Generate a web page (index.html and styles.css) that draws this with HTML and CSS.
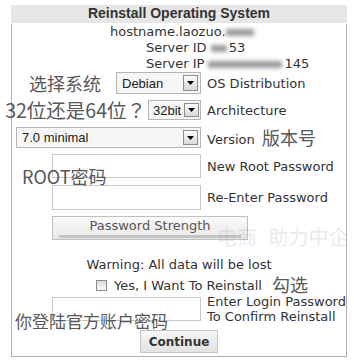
FILE: index.html
```html
<!DOCTYPE html>
<html lang="en">

<head>
  <meta charset="UTF-8">
  <title>Reinstall Operating System</title>
  <link rel="stylesheet" href="styles.css">
</head>

<body>
  <div class="panel">
    <div class="title">Reinstall Operating System</div>
    <div class="box">
      <div class="info">
        <div class="host">hostname.laozuo.<span class="blur b-host"></span></div>
        <div class="srv">Server ID <span class="blur b-id"></span>53</div>
        <div class="srv">Server IP<span class="blur b-ip"></span>145</div>
      </div>

      <div class="row r-os">
        <div class="ctl">
          <span class="note">选择系统</span>
          <div class="select s-os"><span>Debian</span><i class="arrow"><svg width="7" height="4" viewBox="0 0 7 4"><path d="M0 0h7L3.5 4z" fill="#000"/></svg></i></div>
        </div>
        <div class="lbl">OS Distribution</div>
      </div>

      <div class="row r-arch">
        <div class="ctl">
          <span class="note big">32位还是64位？</span>
          <div class="select s-arch"><span>32bit</span><i class="arrow"><svg width="7" height="4" viewBox="0 0 7 4"><path d="M0 0h7L3.5 4z" fill="#000"/></svg></i></div>
        </div>
        <div class="lbl">Architecture</div>
      </div>

      <div class="row r-ver">
        <div class="ctl">
          <div class="select s-ver"><span>7.0 minimal</span><i class="arrow"><svg width="7" height="4" viewBox="0 0 7 4"><path d="M0 0h7L3.5 4z" fill="#000"/></svg></i></div>
        </div>
        <div class="lbl">Version <span class="note ver">版本号</span></div>
      </div>

      <div class="row r-pw1">
        <div class="ctl"><input class="field f1" type="password"></div>
        <div class="lbl">New Root Password</div>
      </div>

      <div class="row r-pw2">
        <div class="ctl"><input class="field f2" type="password"></div>
        <div class="lbl">Re-Enter Password</div>
      </div>

      <div class="strength">
        <span>Password Strength</span>
        <i class="meter"></i>
      </div>

      <div class="warn">Warning: All data will be lost</div>

      <div class="agree">
        <i class="check"></i>
        <span class="agree-text">Yes, I Want To Reinstall<span class="note tick">勾选</span></span>
      </div>

      <div class="row r-confirm">
        <div class="ctl"><input class="field f3" type="password"></div>
        <div class="lbl two">Enter Login Password<br>To Confirm Reinstall</div>
      </div>

      <div class="actions">
        <button class="continue">Continue</button>
      </div>

      <span class="note tag-root">ROOT密码</span>
      <span class="note tag-login">你登陆官方账户密码</span>
    </div>
  </div>

  <div class="watermark">电商 助力中企</div>
</body>

</html>
```

FILE: styles.css
```css
* {
  margin: 0;
  padding: 0;
  box-sizing: border-box;
}

body {
  position: relative;
  width: 354px;
  height: 364px;
  overflow: hidden;
  font: 13px "DejaVu Sans", sans-serif;
  color: #333;
  background: #fff;
}

.panel {
  width: 336px;
  margin: 5px 0 0 11px;
}

.title {
  height: 18px;
  line-height: 18px;
  text-align: center;
  font: bold 14px "Liberation Sans", sans-serif;
  color: #333;
  background-color: #e6e6e6;
}

.box {
  position: relative;
  border: 1px solid #b0b0b0;
  border-top: 0;
  padding-bottom: 3px;
}

/* info lines */
.info div {
  height: 16px;
  line-height: 16px;
  white-space: nowrap;
}

.info div:first-child {
  margin-top: 1px;
}

.host {
  padding-left: 98px;
}

.srv {
  padding-left: 134px;
}

.blur {
  display: inline-block;
  height: 7px;
  vertical-align: middle;
  background-color: #9a9a9a;
  filter: blur(2px);
}

.b-host {
  width: 28px;
}

.b-id {
  width: 16px;
  margin-right: 2px;
}

.b-ip {
  width: 74px;
  margin: 0 2px 0 4px;
}

/* form rows */
.row {
  display: grid;
  grid-template-columns: 189px 1fr;
  column-gap: 6px;
  align-items: center;
}

.ctl {
  display: flex;
  align-items: center;
  justify-content: flex-end;
}

.lbl {
  white-space: nowrap;
}

.lbl.two {
  line-height: 15px;
}

.note {
  font-family: "Noto Sans CJK SC", sans-serif;
  font-size: 18px;
  line-height: 1;
  color: #585858;
  white-space: nowrap;
}

.note.big {
  font-family: "Noto Sans CJK JP", sans-serif;
  font-size: 19.5px;
  margin-right: 2px;
}

.r-os .note {
  margin-right: 15px;
}

.r-arch {
  margin-top: 6px;
}

.r-ver {
  margin-top: 7px;
}

.note.ver {
  margin-left: 3px;
  vertical-align: -1px;
}

.r-pw1 {
  margin-top: 6px;
}

.r-pw2 {
  margin-top: 7px;
}

.r-confirm {
  margin-top: 1px;
}

.select {
  display: flex;
  flex-shrink: 0;
  align-items: center;
  padding-left: 5px;
  border: 1px solid #b5b5b5;
  background-color: #f6f6f6;
  font: 13px "Liberation Sans", sans-serif;
  color: #222;
}

.select span {
  flex: 1;
  white-space: nowrap;
}

.arrow {
  display: flex;
  flex-shrink: 0;
  align-items: center;
  justify-content: center;
  width: 15px;
  height: calc(100% - 4px);
  margin-right: 2px;
  border: 1px solid #8d8d8d;
  background: linear-gradient(#fbfbfb, #dadada);
}

.s-os {
  width: 85px;
  height: 22px;
}

.s-arch {
  width: 53px;
  height: 20px;
  padding-left: 4px;
}

.s-arch .arrow {
  margin-right: 1px;
}

.s-ver {
  width: 185px;
  height: 21px;
}

.field {
  width: 149px;
  flex-shrink: 0;
  border: 1px solid #c8c8c8;
  background: #fff;
}

.f1 {
  height: 24px;
}

.f2 {
  height: 25px;
}

.f3 {
  height: 24px;
}

.strength {
  display: flex;
  flex-direction: column;
  align-items: center;
  width: 196px;
  height: 24px;
  margin: 6px 0 0 40px;
  border: 1px solid #c0c0c0;
  background: linear-gradient(#fafafa, #e8e8e8);
  color: #555;
}

.strength span {
  line-height: 18px;
}

.meter {
  align-self: stretch;
  height: 3px;
  margin: 0 6px;
  background-color: #c4c4c4;
}

.warn {
  margin-top: 17px;
  line-height: 16px;
  text-align: center;
}

.agree {
  display: flex;
  align-items: center;
  justify-content: center;
  gap: 7px;
  height: 16px;
  margin-top: 4px;
}

.check {
  width: 11px;
  height: 11px;
  border: 1px solid #8e8e8e;
  background: linear-gradient(#dcdcdc, #fafafa);
}

.agree-text {
  position: relative;
}

.tick {
  position: absolute;
  left: 100%;
  top: -3px;
  margin-left: 10px;
}

.actions {
  display: flex;
  justify-content: center;
  margin-top: 6px;
}

.continue {
  width: 78px;
  height: 23px;
  border: 1px solid #c4c4c4;
  background: linear-gradient(#f7f7f7, #e2e2e2);
  font: bold 12px "DejaVu Sans", sans-serif;
  color: #333;
}

/* annotations laid over the form */
.tag-root {
  position: absolute;
  left: 10px;
  top: 143px;
}

.tag-login {
  position: absolute;
  left: 3px;
  top: 288px;
  font-size: 17px;
}

.watermark {
  position: absolute;
  left: 217px;
  top: 222px;
  font: 20px "Noto Sans CJK SC", sans-serif;
  word-spacing: 7px;
  color: rgba(170, 175, 185, 0.28);
  white-space: nowrap;
  pointer-events: none;
}
```
